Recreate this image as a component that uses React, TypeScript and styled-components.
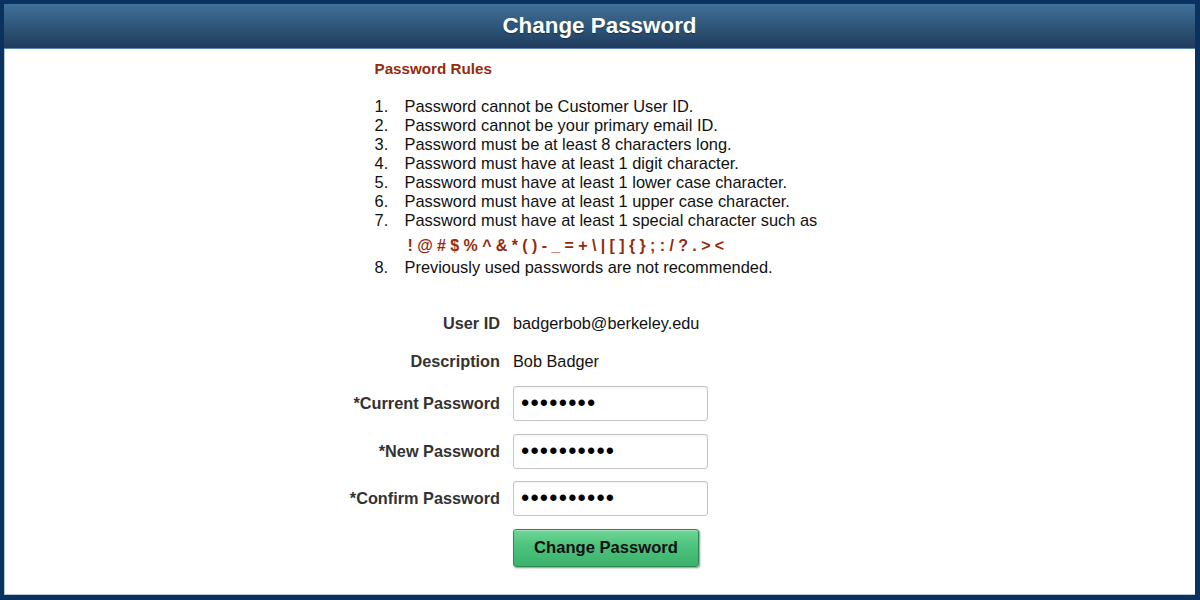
import React from "react";
import styled, { createGlobalStyle } from "styled-components";

const Global = createGlobalStyle`
  html, body { margin: 0; padding: 0; height: 100%; }
  body { font-family: "Liberation Sans", Arial, sans-serif; background: #0b3161; }
  #root { height: 100%; }
`;

const Frame = styled.div`
  box-sizing: border-box;
  height: 600px;
  border-style: solid;
  border-color: #0b3161;
  border-width: 4px 5px 5px 4px;
  background: #fff;
  display: flex;
  flex-direction: column;
  box-shadow: inset 1px -1px 0 #b9c6d4;
`;

const Header = styled.header`
  height: 44px;
  flex: none;
  display: flex;
  align-items: center;
  justify-content: center;
  background: linear-gradient(to bottom, #41709a 0%, #2f5679 50%, #1f3c5d 100%);
  border-bottom: 1px solid #5d87ae;
`;

const Title = styled.h1`
  margin: 0;
  color: #fff;
  font-size: 22.4px;
  font-weight: bold;
  text-shadow: 0 1px 1px rgba(0, 0, 0, 0.35);
`;

const Rules = styled.section`
  width: 450px;
  margin: 0 auto;
  padding-top: 11px;
`;

const RulesHeading = styled.h2`
  margin: 0;
  font-size: 15.2px;
  line-height: 18px;
  font-weight: bold;
  color: #962b0c;
`;

const RuleList = styled.ol`
  list-style: none;
  margin: 19px 0 0;
  padding: 0;
`;

const Rule = styled.li`
  display: flex;
  font-size: 16.4px;
  line-height: 19px;
  color: #111;
`;

const Num = styled.span`
  width: 30px;
  flex: none;
`;

const Special = styled.div`
  margin: 5px 0 1px 33px;
  font-size: 16px;
  line-height: 22px;
  font-weight: bold;
  color: #962b0c;
  letter-spacing: -0.05px;
  white-space: pre;
`;

const Form = styled.form`
  display: grid;
  grid-template-columns: 496px 1fr;
  column-gap: 13px;
  row-gap: 12.5px;
  margin-top: 34px;
  align-items: center;
`;

const Label = styled.label<{ $h: number }>`
  height: ${(p) => p.$h}px;
  display: flex;
  align-items: center;
  justify-content: flex-end;
  font-size: 16.3px;
  font-weight: bold;
  color: #333;
`;

const Value = styled.div`
  height: 25px;
  display: flex;
  align-items: center;
  font-size: 16.3px;
  color: #111;
`;

const Input = styled.input`
  box-sizing: border-box;
  width: 195px;
  height: 35px;
  margin: 0;
  padding: 0 7px;
  border: 1px solid #c4c4c4;
  border-radius: 3px;
  background: #fff;
  font-family: "Liberation Sans", Arial, sans-serif;
  font-size: 23.5px;
  letter-spacing: 1.2px;
  color: #000;
  outline: none;
  box-shadow: inset 0 1px 1px rgba(0, 0, 0, 0.05);
`;

const Spacer = styled.div``;

const Button = styled.button`
  box-sizing: border-box;
  width: 186px;
  height: 38px;
  margin: 0;
  border: 1px solid #2c8a52;
  border-radius: 3px;
  background: linear-gradient(to bottom, #6fd697 0%, #4cc27c 45%, #3bb36b 100%);
  box-shadow: 1px 1px 2px rgba(0, 0, 0, 0.45), inset 0 1px 0 rgba(255, 255, 255, 0.35);
  font-family: "Liberation Sans", Arial, sans-serif;
  font-size: 16.6px;
  font-weight: bold;
  color: #111;
  cursor: pointer;
`;

const rules = [
  "Password cannot be Customer User ID.",
  "Password cannot be your primary email ID.",
  "Password must be at least 8 characters long.",
  "Password must have at least 1 digit character.",
  "Password must have at least 1 lower case character.",
  "Password must have at least 1 upper case character.",
  "Password must have at least 1 special character such as",
];

export default function App() {
  return (
    <>
      <Global />
      <Frame>
        <Header>
          <Title>Change Password</Title>
        </Header>
        <Rules>
          <RulesHeading>Password Rules</RulesHeading>
          <RuleList>
            {rules.map((r, i) => (
              <Rule key={i}>
                <Num>{i + 1}.</Num>
                <span>{r}</span>
              </Rule>
            ))}
            <Special>{"! @ # $ % ^ & * ( ) - _ = + \\ | [ ] { } ; : / ? . > <"}</Special>
            <Rule>
              <Num>8.</Num>
              <span>Previously used passwords are not recommended.</span>
            </Rule>
          </RuleList>
        </Rules>
        <Form onSubmit={(e) => e.preventDefault()}>
          <Label $h={25}>User ID</Label>
          <Value>badgerbob@berkeley.edu</Value>
          <Label $h={25}>Description</Label>
          <Value>Bob Badger</Value>
          <Label $h={35}>*Current Password</Label>
          <Input type="password" value="password" readOnly />
          <Label $h={35}>*New Password</Label>
          <Input type="password" value="newpasswrd" readOnly />
          <Label $h={35}>*Confirm Password</Label>
          <Input type="password" value="newpasswrd" readOnly />
          <Spacer />
          <Button type="submit">Change Password</Button>
        </Form>
      </Frame>
    </>
  );
}
